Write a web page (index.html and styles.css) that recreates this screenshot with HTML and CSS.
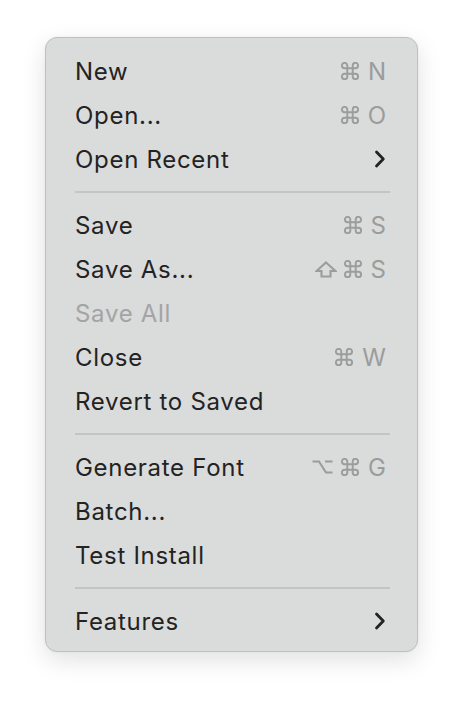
FILE: index.html
```html
<!DOCTYPE html>
<html>
<head>
<meta charset="utf-8">
<link rel="stylesheet" href="styles.css">
</head>
<body>
<div class="menu">
  <div class="item"><span class="label">New</span><span class="key"><svg class="cmd" width="20" height="18" viewBox="0 0 20 20"><path d="M7 7 V4 A3 3 0 1 0 4 7 H16 A3 3 0 1 0 13 4 V16 A3 3 0 1 0 16 13 H4 A3 3 0 1 0 7 16 Z"/></svg><span class="letter">N</span></span></div>
  <div class="item"><span class="label">Open...</span><span class="key"><svg class="cmd" width="20" height="18" viewBox="0 0 20 20"><path d="M7 7 V4 A3 3 0 1 0 4 7 H16 A3 3 0 1 0 13 4 V16 A3 3 0 1 0 16 13 H4 A3 3 0 1 0 7 16 Z"/></svg><span class="letter">O</span></span></div>
  <div class="item"><span class="label">Open Recent</span><svg class="chev" width="12" height="20" viewBox="0 0 12 20"><path d="M2.5 3 L9.3 10 L2.5 17"/></svg></div>
  <div class="sep"></div>
  <div class="item"><span class="label">Save</span><span class="key"><svg class="cmd" width="20" height="18" viewBox="0 0 20 20"><path d="M7 7 V4 A3 3 0 1 0 4 7 H16 A3 3 0 1 0 13 4 V16 A3 3 0 1 0 16 13 H4 A3 3 0 1 0 7 16 Z"/></svg><span class="letter">S</span></span></div>
  <div class="item"><span class="label">Save As...</span><span class="key"><svg class="shift" width="22" height="17" viewBox="0 0 22 17"><path d="M11 1.5 L20.5 10 H15.5 V15.5 H6.5 V10 H1.5 Z"/></svg><svg class="cmd" width="20" height="18" viewBox="0 0 20 20"><path d="M7 7 V4 A3 3 0 1 0 4 7 H16 A3 3 0 1 0 13 4 V16 A3 3 0 1 0 16 13 H4 A3 3 0 1 0 7 16 Z"/></svg><span class="letter">S</span></span></div>
  <div class="item disabled"><span class="label">Save All</span></div>
  <div class="item"><span class="label">Close</span><span class="key"><svg class="cmd" width="20" height="18" viewBox="0 0 20 20"><path d="M7 7 V4 A3 3 0 1 0 4 7 H16 A3 3 0 1 0 13 4 V16 A3 3 0 1 0 16 13 H4 A3 3 0 1 0 7 16 Z"/></svg><span class="letter">W</span></span></div>
  <div class="item"><span class="label">Revert to Saved</span></div>
  <div class="sep"></div>
  <div class="item"><span class="label">Generate Font</span><span class="key"><svg class="opt" width="21" height="14" viewBox="0 0 21 14"><path d="M0.5 1.5 H7 L14 12.5 H20.5 M13 1.5 H20.5"/></svg><svg class="cmd" width="20" height="18" viewBox="0 0 20 20"><path d="M7 7 V4 A3 3 0 1 0 4 7 H16 A3 3 0 1 0 13 4 V16 A3 3 0 1 0 16 13 H4 A3 3 0 1 0 7 16 Z"/></svg><span class="letter">G</span></span></div>
  <div class="item"><span class="label">Batch...</span></div>
  <div class="item"><span class="label">Test Install</span></div>
  <div class="sep"></div>
  <div class="item"><span class="label">Features</span><svg class="chev" width="12" height="20" viewBox="0 0 12 20"><path d="M2.5 3 L9.3 10 L2.5 17"/></svg></div>
</div>
</body>
</html>
```
FILE: styles.css
```css
html, body {
  margin: 0;
  padding: 0;
  background: #ffffff;
}
body {
  width: 464px;
  height: 706px;
  padding: 37px 0 0 45px;
  box-sizing: border-box;
  font-family: Inter, "Noto Sans", "DejaVu Sans", sans-serif;
}
.menu {
  width: 373px;
  height: 615px;
  box-sizing: border-box;
  background: #dadbdb;
  border: 1px solid #bfc0c0;
  border-radius: 12px;
  box-shadow: 0 8px 24px rgba(0,0,0,0.12), 0 0 3px rgba(0,0,0,0.05);
  padding: 11px 31px 0 29px;
  display: flex;
  flex-direction: column;
}
.item {
  height: 44px;
  display: flex;
  align-items: center;
  justify-content: space-between;
  font-size: 24px;
  color: #232323;
  letter-spacing: 0.7px;
}
.item.disabled {
  color: #a3a4a4;
}
.key {
  color: #9b9c9c;
  display: flex;
  align-items: center;
}
.key svg {
  fill: none;
  stroke: #9b9c9c;
  stroke-width: 2.1;
  stroke-linejoin: round;
}
.key .shift {
  margin-right: 6px;
  stroke-linejoin: miter;
}
.key .opt {
  margin-right: 7px;
  stroke-linejoin: miter;
}
.key .cmd {
  margin-right: 8px;
}
.letter {
  letter-spacing: 0;
}
.chev {
  fill: none;
  stroke: #232323;
  stroke-width: 2.8;
  stroke-linecap: round;
  stroke-linejoin: round;
}
.sep {
  height: 22px;
  display: flex;
  align-items: center;
  margin-right: -4px;
}
.sep::before {
  content: "";
  display: block;
  width: 100%;
  height: 2px;
  background: #c3c4c4;
}
```
